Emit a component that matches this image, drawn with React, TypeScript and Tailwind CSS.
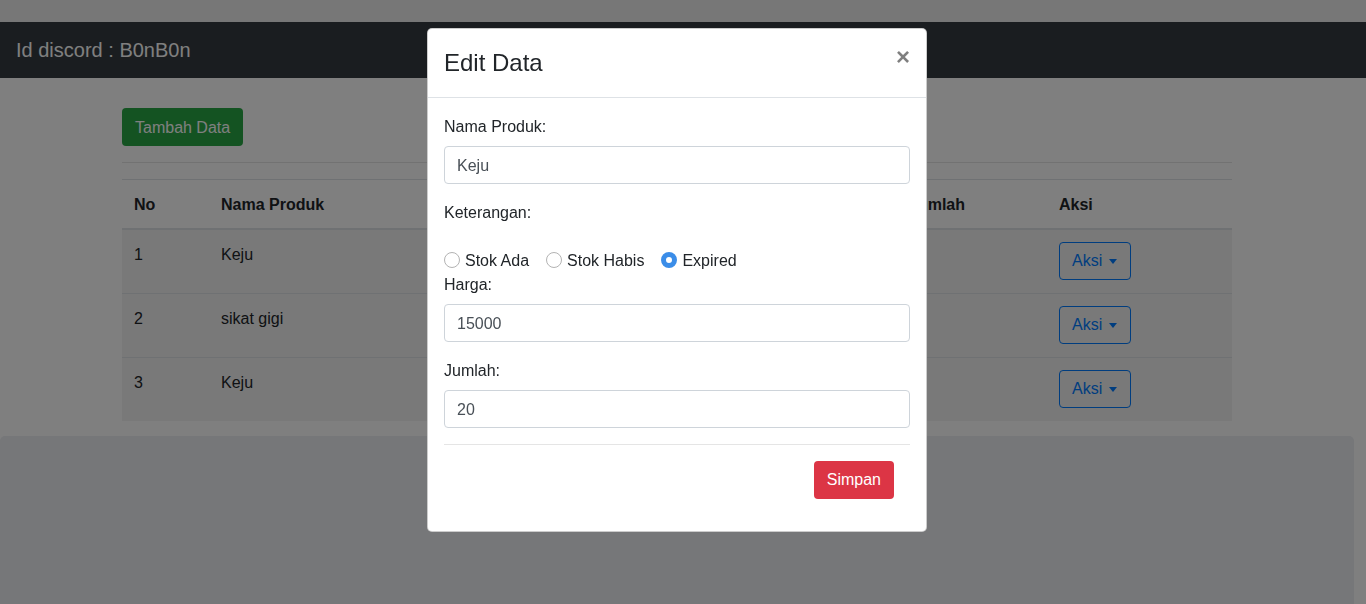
import { useState } from "react";

type Produk = {
    no: number;
    nama: string;
    keterangan: string;
    harga: string;
    jumlah: string;
};

const produk: Produk[] = [
    { no: 1, nama: "Keju", keterangan: "Expired", harga: "15000", jumlah: "20" },
    { no: 2, nama: "sikat gigi", keterangan: "Stok Ada", harga: "5000", jumlah: "8" },
    { no: 3, nama: "Keju", keterangan: "Stok Ada", harga: "15000", jumlah: "9" },
];

function AksiButton() {
    return (
        <button className="h-[38px] pl-3 pr-[13px] border border-[#007bff] rounded-[4px] text-[#007bff] text-base flex items-center">
            Aksi
            <span className="ml-[7px] w-0 h-0 border-l-[4.5px] border-r-[4.5px] border-t-[5px] border-l-transparent border-r-transparent border-t-[#007bff]"></span>
        </button>
    );
}

function EditModal() {
    const [nama, setNama] = useState("Keju");
    const [ket, setKet] = useState("Expired");
    const [harga, setHarga] = useState("15000");
    const [jumlah, setJumlah] = useState("20");

    const inputClass =
        "w-full h-[38px] px-3 pt-px border border-[#ced4da] rounded-[4px] text-base text-[#495057] bg-white outline-none";

    return (
        <div className="fixed inset-0 z-20 bg-black/50">
            <div className="absolute left-[427px] top-[28px] w-[500px] bg-white border border-black/20 rounded-[5px] text-[#212529]">
                <div className="flex items-start justify-between px-4 pt-4 pb-4 border-b border-[#dee2e6] h-[69px]">
                    <h4 className="text-2xl leading-9">Edit Data</h4>
                    <button className="text-2xl font-bold leading-none text-black/50">×</button>
                </div>
                <div className="px-4 pt-4">
                    <label className="block pt-px mb-[7px] leading-6">Nama Produk:</label>
                    <input className={inputClass} value={nama} onChange={(e) => setNama(e.target.value)} />
                    <label className="block mt-4 pt-px mb-[7px] leading-6">Keterangan:</label>
                    <div className="flex items-center mt-[23px] h-6">
                        {["Stok Ada", "Stok Habis", "Expired"].map((k) => (
                            <label key={k} className="flex items-center mr-[17px] leading-6">
                                <input
                                    type="radio"
                                    name="ket"
                                    checked={ket === k}
                                    onChange={() => setKet(k)}
                                    className="appearance-none w-4 h-4 m-0 mr-[5px] rounded-full border border-[#b3b3b3] bg-white checked:border-[5px] checked:border-[#3b8de8]"
                                />
                                <span className="pt-px">{k}</span>
                            </label>
                        ))}
                    </div>
                    <label className="block pt-px mb-[7px] leading-6">Harga:</label>
                    <input className={inputClass} value={harga} onChange={(e) => setHarga(e.target.value)} />
                    <label className="block mt-4 pt-px mb-[7px] leading-6">Jumlah:</label>
                    <input className={inputClass} value={jumlah} onChange={(e) => setJumlah(e.target.value)} />
                    <hr className="mt-4 mb-4 border-t border-black/10" />
                </div>
                <div className="flex justify-end pr-8 pb-8">
                    <button className="h-[38px] px-[13px] bg-[#dc3545] text-white rounded-[4px] text-base">Simpan</button>
                </div>
            </div>
        </div>
    );
}

export default function App() {
    return (
        <div className="h-[604px] overflow-hidden bg-white font-['Liberation_Sans',Arial,sans-serif] text-base text-[#212529] relative">
            <div className="h-[22px] bg-[#eeeeee]"></div>
            <nav className="h-14 bg-[#343a40] flex items-center px-4">
                <span className="text-xl text-white">Id discord : B0nB0n</span>
            </nav>
            <div className="pr-3">
                <div className="w-[1110px] ml-[122px] pt-[30px]">
                    <button className="h-[38px] px-[13px] bg-[#28a745] text-white rounded-[4px] pt-px">Tambah Data</button>
                    <hr className="mt-4 mb-4 border-t border-black/10" />
                    <table className="w-full border-collapse mb-[15px]">
                        <thead>
                            <tr className="border-t border-[#dee2e6] border-b-2">
                                <th className="w-[87px] px-3 pt-[13px] pb-[11px] text-left align-bottom font-bold">No</th>
                                <th className="w-[220px] px-3 pt-[13px] pb-[11px] text-left align-bottom font-bold">Nama Produk</th>
                                <th className="w-[240px] px-3 pt-[13px] pb-[11px] text-left align-bottom font-bold">Keterangan</th>
                                <th className="w-[228px] px-3 pt-[13px] pb-[11px] text-left align-bottom font-bold">Harga</th>
                                <th className="w-[150px] px-3 pt-[13px] pb-[11px] text-left align-bottom font-bold">Jumlah</th>
                                <th className="w-[185px] px-3 pt-[13px] pb-[11px] text-left align-bottom font-bold">Aksi</th>
                            </tr>
                        </thead>
                        <tbody>
                            {produk.map((p, i) => (
                                <tr key={p.no} className={"bg-[#f2f2f2] " + (i > 0 ? "border-t border-[#dee2e6]" : "")}>
                                    <td className="px-3 pt-[13px] pb-[12px] align-top">{p.no}</td>
                                    <td className="px-3 pt-[13px] pb-[12px] align-top">{p.nama}</td>
                                    <td className="px-3 pt-[13px] pb-[12px] align-top">{p.keterangan}</td>
                                    <td className="px-3 pt-[13px] pb-[12px] align-top">{p.harga}</td>
                                    <td className="px-3 pt-[13px] pb-[12px] align-top">{p.jumlah}</td>
                                    <td className="px-3 pt-3 pb-[13px] align-top">
                                        <AksiButton />
                                    </td>
                                </tr>
                            ))}
                        </tbody>
                    </table>
                </div>
                <div className="h-[200px] bg-[#eceef2] rounded-[5px]"></div>
            </div>
            <EditModal />
        </div>
    );
}
